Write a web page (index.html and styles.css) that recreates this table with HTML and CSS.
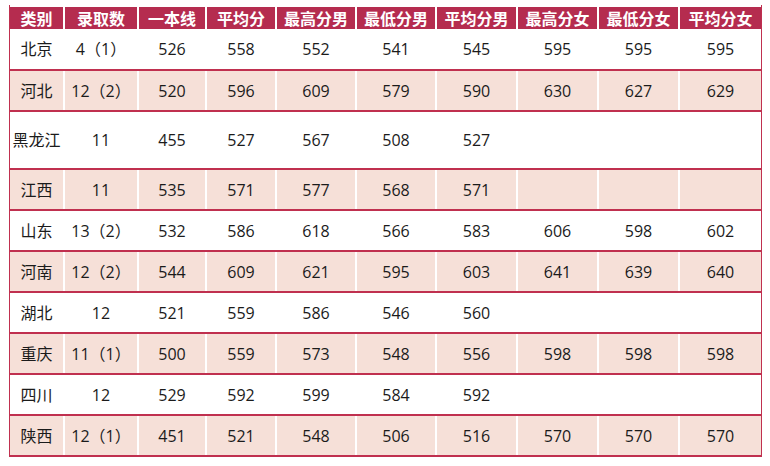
FILE: index.html
```html
<!DOCTYPE html>
<html lang="zh-CN">
<head>
<meta charset="utf-8">
<title>录取分数</title>
<link rel="stylesheet" href="styles.css">
</head>
<body>
<div class="page">
  <div class="table">
    <div class="row head">
      <div class="cell">类别</div><div class="cell">录取数</div><div class="cell">一本线</div><div class="cell">平均分</div><div class="cell">最高分男</div><div class="cell">最低分男</div><div class="cell">平均分男</div><div class="cell">最高分女</div><div class="cell">最低分女</div><div class="cell">平均分女</div>
    </div>
    <div class="row first">
      <div class="cell">北京</div><div class="cell">4（1）</div><div class="cell">526</div><div class="cell">558</div><div class="cell">552</div><div class="cell">541</div><div class="cell">545</div><div class="cell">595</div><div class="cell">595</div><div class="cell">595</div>
    </div>
    <div class="row alt">
      <div class="cell">河北</div><div class="cell">12（2）</div><div class="cell">520</div><div class="cell">596</div><div class="cell">609</div><div class="cell">579</div><div class="cell">590</div><div class="cell">630</div><div class="cell">627</div><div class="cell">629</div>
    </div>
    <div class="row tall">
      <div class="cell">黑龙江</div><div class="cell">11</div><div class="cell">455</div><div class="cell">527</div><div class="cell">567</div><div class="cell">508</div><div class="cell">527</div><div class="cell"></div><div class="cell"></div><div class="cell"></div>
    </div>
    <div class="row alt">
      <div class="cell">江西</div><div class="cell">11</div><div class="cell">535</div><div class="cell">571</div><div class="cell">577</div><div class="cell">568</div><div class="cell">571</div><div class="cell"></div><div class="cell"></div><div class="cell"></div>
    </div>
    <div class="row">
      <div class="cell">山东</div><div class="cell">13（2）</div><div class="cell">532</div><div class="cell">586</div><div class="cell">618</div><div class="cell">566</div><div class="cell">583</div><div class="cell">606</div><div class="cell">598</div><div class="cell">602</div>
    </div>
    <div class="row alt">
      <div class="cell">河南</div><div class="cell">12（2）</div><div class="cell">544</div><div class="cell">609</div><div class="cell">621</div><div class="cell">595</div><div class="cell">603</div><div class="cell">641</div><div class="cell">639</div><div class="cell">640</div>
    </div>
    <div class="row">
      <div class="cell">湖北</div><div class="cell">12</div><div class="cell">521</div><div class="cell">559</div><div class="cell">586</div><div class="cell">546</div><div class="cell">560</div><div class="cell"></div><div class="cell"></div><div class="cell"></div>
    </div>
    <div class="row alt">
      <div class="cell">重庆</div><div class="cell">11（1）</div><div class="cell">500</div><div class="cell">559</div><div class="cell">573</div><div class="cell">548</div><div class="cell">556</div><div class="cell">598</div><div class="cell">598</div><div class="cell">598</div>
    </div>
    <div class="row">
      <div class="cell">四川</div><div class="cell">12</div><div class="cell">529</div><div class="cell">592</div><div class="cell">599</div><div class="cell">584</div><div class="cell">592</div><div class="cell"></div><div class="cell"></div><div class="cell"></div>
    </div>
    <div class="row alt">
      <div class="cell">陕西</div><div class="cell">12（1）</div><div class="cell">451</div><div class="cell">521</div><div class="cell">548</div><div class="cell">506</div><div class="cell">516</div><div class="cell">570</div><div class="cell">570</div><div class="cell">570</div>
    </div>
  </div>
</div>
</body>
</html>
```

FILE: styles.css
```css
* { box-sizing: border-box; }

html, body {
  margin: 0;
  padding: 0;
  background: #ffffff;
}

.page {
  padding: 5px 0 0 9px;
  font-family: "Open Sans", "Noto Sans CJK SC", sans-serif;
  font-size: 16px;
  color: #1b1b1b;
}

.table {
  width: 753px;
  border-left: 1px solid #c0304f;
  border-right: 1px solid #c0304f;
  padding-top: 2px;
}

.row {
  display: grid;
  grid-template-columns: 55px 74px 68px 70px 80px 80px 81px 81px 81px 81px;
  height: 41px;
  border-bottom: 2px solid #c0304f;
}

.row.first { height: 42px; }
.row.tall { height: 58px; }

.row.alt { background: #f6e0d8; }

.cell {
  display: flex;
  align-items: center;
  justify-content: center;
  border-right: 2px solid #ffffff;
  line-height: 1;
  white-space: nowrap;
}

.cell:last-child { border-right: none; }

.row.head {
  height: 22px;
  border-bottom: none;
  background: #b52c4f;
  color: #ffffff;
  font-family: "Noto Sans CJK SC", sans-serif;
  font-weight: 700;
}
```
